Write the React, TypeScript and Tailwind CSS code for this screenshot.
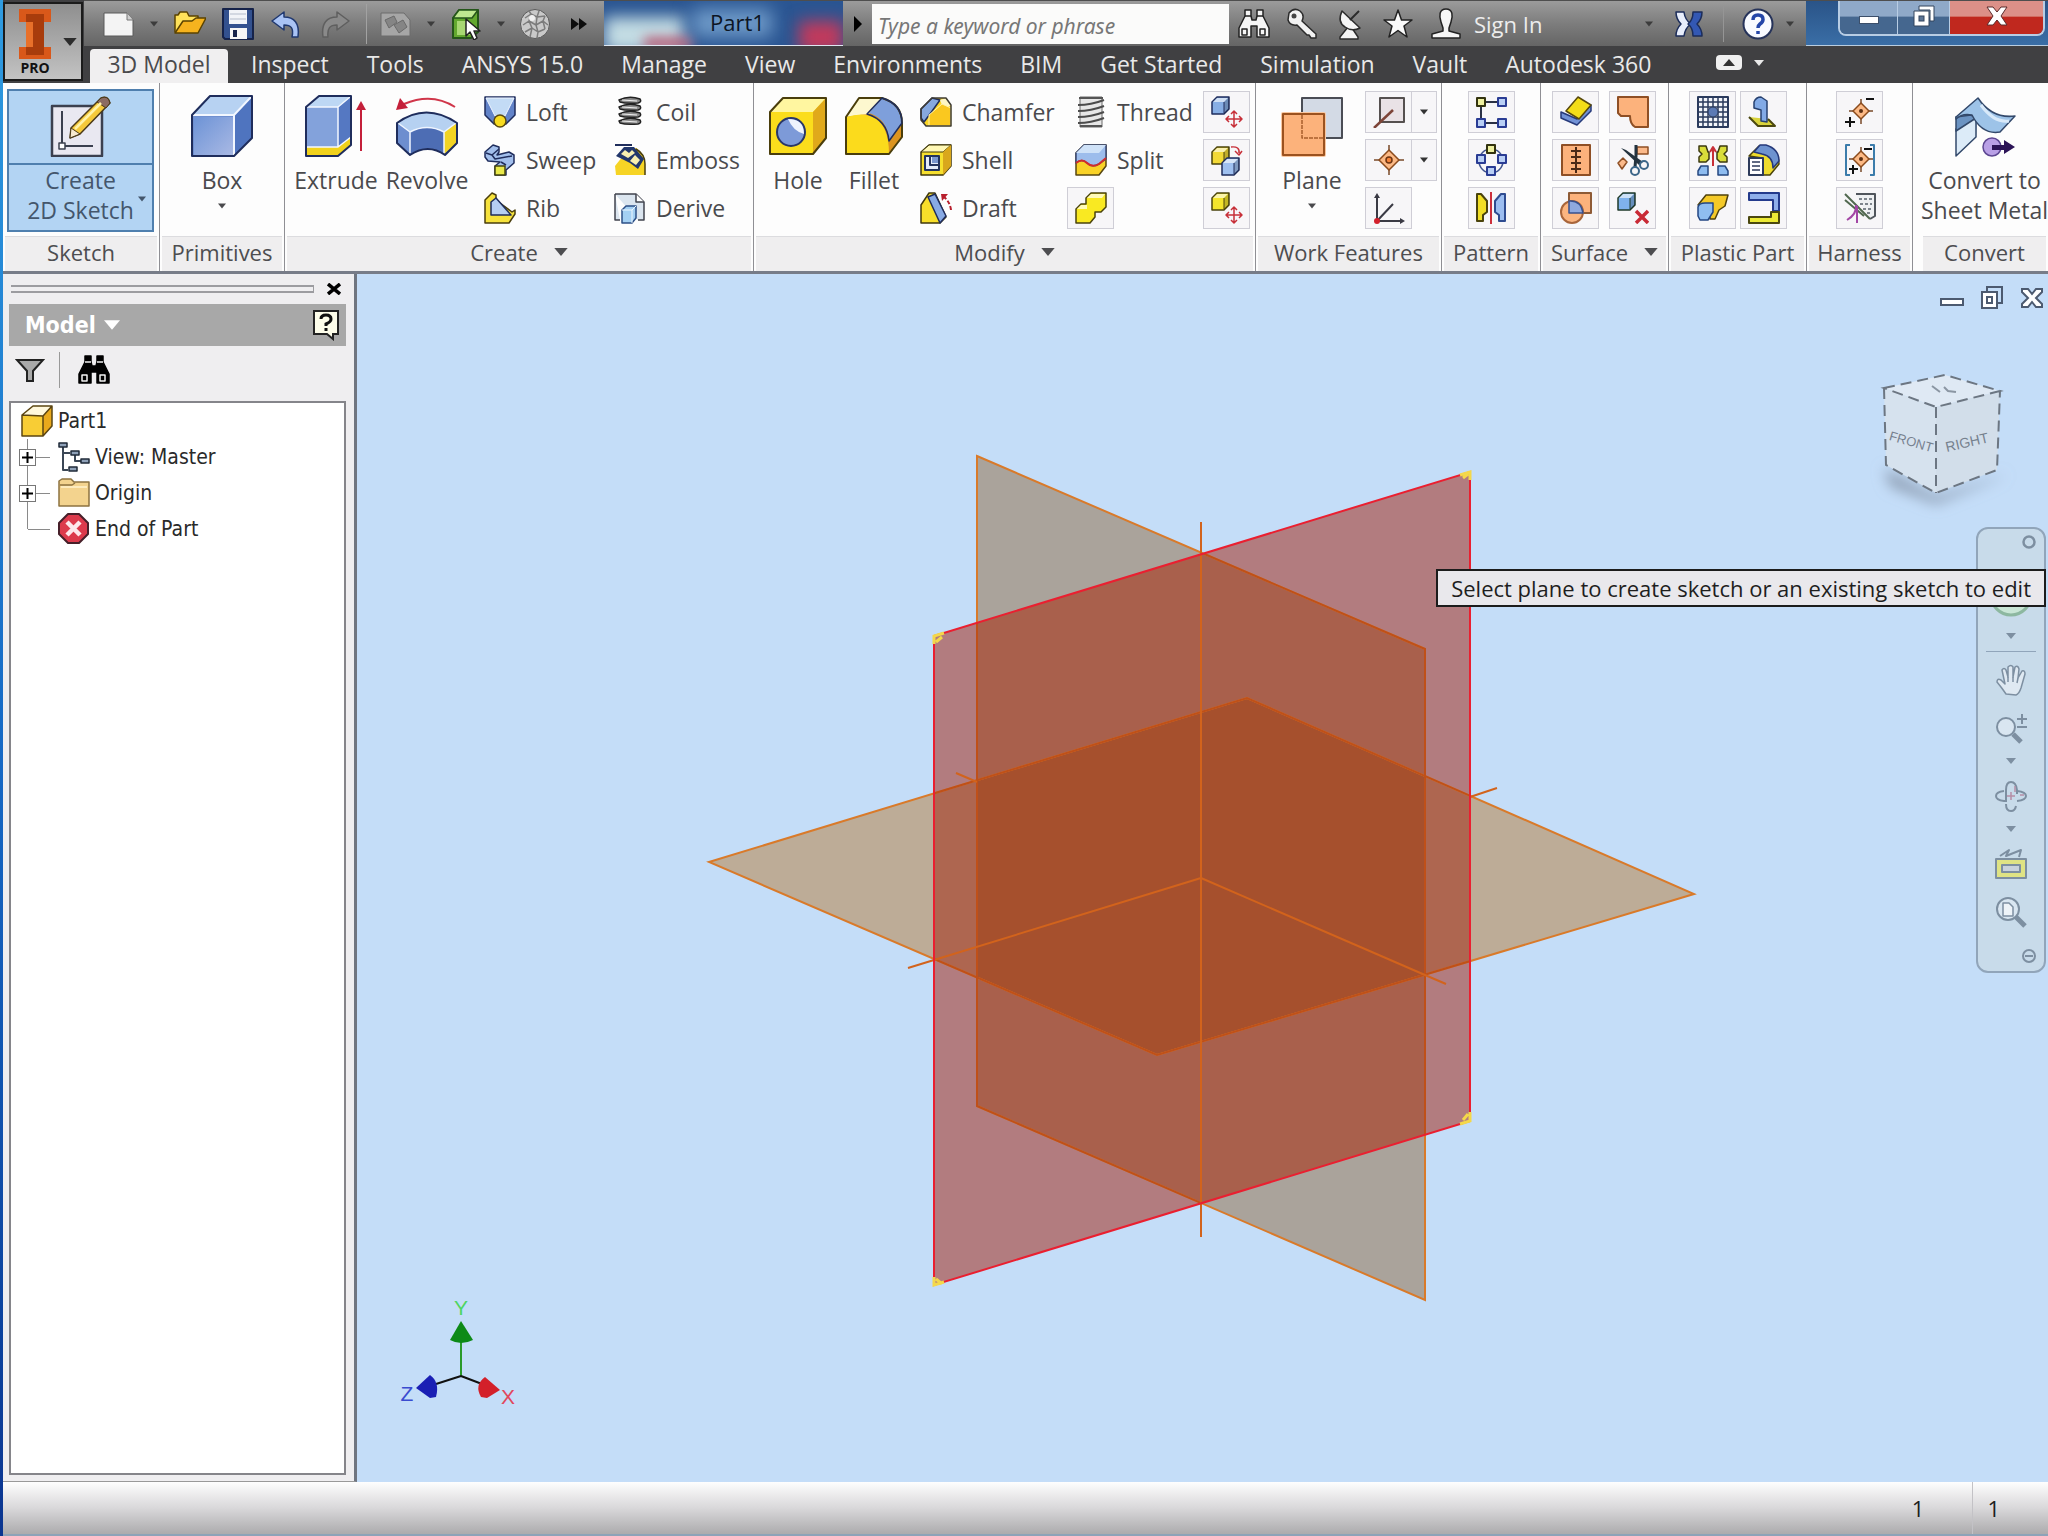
import React from 'react';

type Kids = { children?: React.ReactNode };

const NAVY = '#1f2d5c';

function Ico({ children }: Kids) {
  return (
    <svg viewBox="0 0 32 32" className="w-8 h-8 shrink-0" fill="none" strokeLinejoin="round" aria-hidden="true">
      {children}
    </svg>
  );
}

function BigIco({ children }: Kids) {
  return (
    <svg viewBox="0 0 62 62" className="w-[62px] h-[62px] shrink-0" fill="none" strokeLinejoin="round" aria-hidden="true">
      {children}
    </svg>
  );
}

function Caret({ className = '' }: { className?: string }) {
  return (
    <svg viewBox="0 0 10 6" className={`shrink-0 ${className}`} aria-hidden="true">
      <path d="M0 0H10L5 6Z" fill="currentColor" />
    </svg>
  );
}

/* ---------- quick access and title bar icons ---------- */

const NewIcon = () => (
  <Ico>
    <path d="M2 5H25L31 12V28H2Z" fill="#f4f4f4" stroke="#5a5a5a" />
    <path d="M25 5V12H31" fill="#cfcfcf" stroke="#777" />
  </Ico>
);
const OpenIcon = () => (
  <Ico>
    <path d="M1 24V7H4L6 4H13L15 8H24V14" fill="#ffe25a" stroke="#5b4300" strokeWidth="1.5" />
    <path d="M1 25L9 13H18L22 10H32L24 25Z" fill="#f6b31e" stroke="#5b4300" strokeWidth="1.5" />
  </Ico>
);
const SaveIcon = () => (
  <Ico>
    <path d="M1 1H31V31H3L1 29Z" fill="#33518f" stroke="#16234a" strokeWidth="2" />
    <rect x="7" y="2" width="18" height="14" fill="#f2f4f8" />
    <path d="M8 6H24M8 11H24" stroke="#b4bccb" />
    <rect x="8" y="20" width="17" height="11" fill="#f5f5f5" />
    <rect x="11" y="22" width="4" height="7" fill="#16234a" />
  </Ico>
);
const UndoIcon = () => (
  <Ico>
    <path d="M2 13L14 4V9C24 9 30 15 28 29H22C24 20 21 17 14 17V22Z" fill="#a9c3f5" stroke="#20386f" strokeWidth="1.5" />
  </Ico>
);
const RedoIcon = () => (
  <Ico>
    <path d="M31 13L19 4V9C9 9 3 15 5 29H10C9 20 12 17 19 17V22Z" fill="#8a8a8a" stroke="#5f5f5f" strokeWidth="1.5" />
  </Ico>
);
const UpdateIcon = () => (
  <Ico>
    <path d="M2 5H25L31 12V28H2Z" fill="#a6a6a6" stroke="#6c6c6c" />
    <path d="M6 12L15 8L18 14L10 20ZM15 17L24 12L28 19L20 25Z" fill="#858585" stroke="#6a6a6a" />
  </Ico>
);
const SelectIcon = () => (
  <Ico>
    <path d="M2 10L8 2H27V24L20 30H2Z" fill="#63a82f" stroke="#25551a" strokeWidth="2" />
    <path d="M2 10L8 2H27L21 10Z" fill="#bfe890" stroke="#25551a" strokeWidth="1.5" />
    <path d="M6 13H19V27H6Z" fill="#a8d873" />
    <path d="M15 11V28L19 24L23 32L26 30L23 23H29Z" fill="#fff" stroke="#222" strokeWidth="1.5" />
  </Ico>
);
const SphereIcon = () => (
  <Ico>
    <circle cx="16" cy="16" r="14.5" fill="#c9c9c9" stroke="#5a5a5a" />
    <path d="M6 10L12 6L18 9L26 8M4 17L10 13L17 17L24 13L29 17M6 24L13 20L19 24L26 21M10 3L12 6L10 13L13 20L11 29M20 3L18 9L17 17L19 24L18 30M26 8L24 13L26 21" stroke="#7c7c7c" strokeWidth="1.5" />
    <circle cx="13" cy="10" r="3" fill="#f1f1f1" />
  </Ico>
);
const BinocularsIcon = ({ dark = false }: { dark?: boolean }) => {
  const body = dark ? '#000' : '#f5f5f5';
  const line = dark ? '#f2f2f2' : '#222';
  return (
    <Ico>
      <path d="M7 2H13V8L14 12H18L19 8V2H25V8L31 20V29H19V18H13V29H1V20L7 8Z" fill={body} stroke={dark ? '#000' : line} strokeWidth="1.5" />
      <path d="M7 8H13M19 8H25M4 21H9V27H4ZM22 21H27V27H22Z" stroke={line} strokeWidth="1.5" />
    </Ico>
  );
};
const KeyIcon = () => (
  <Ico>
    <path d="M3 5Q8 -1 14 3Q19 7 16 13L30 26V30H25L23 27H21L11 17Q4 18 2 12Z" fill="#f2f2f2" stroke="#2b2b2b" strokeWidth="1.5" />
    <circle cx="8" cy="8" r="2.5" fill="#444" />
  </Ico>
);
const DishIcon = () => (
  <Ico>
    <path d="M14 19L6 29V31H24V29L18 20Z" fill="#f5f5f5" stroke="#2b2b2b" strokeWidth="1.5" />
    <path d="M8 3Q3 14 11 19Q18 24 26 20Z" fill="#f5f5f5" stroke="#2b2b2b" strokeWidth="1.5" />
    <path d="M16 12L25 3" stroke="#2b2b2b" strokeWidth="2" />
  </Ico>
);
const StarIcon = () => (
  <Ico>
    <path d="M16 2L19.5 12H30L22 18L25 29L16 22.5L7 29L10 18L2 12H12.500Z" fill="#fafafa" stroke="#222" strokeWidth="1.5" />
  </Ico>
);
const UserIcon = () => (
  <Ico>
    <path d="M16 1C23 1 23 8 21 14L19 20V23L30 26V30H2V26L13 23V20L11 14C9 8 9 1 16 1Z" fill="#f6f6f6" stroke="#222" strokeWidth="1.5" />
  </Ico>
);
const ExchangeIcon = () => (
  <Ico>
    <path d="M3 4H11Q12 12 18 16Q12 20 11 28H3Q3 21 8 16Q3 11 3 4Z" fill="#e8eefc" stroke="#1c2d5a" strokeWidth="1.5" />
    <path d="M29 4H20Q20 12 15 16Q20 20 20 28H29Q29 21 24 16Q29 11 29 4Z" fill="#3358b4" stroke="#1c2d5a" strokeWidth="1.5" />
  </Ico>
);
const HelpIcon = () => (
  <Ico>
    <circle cx="16" cy="16" r="14.5" fill="#f8faff" stroke="#26335a" strokeWidth="2" />
    <path d="M11 12Q11 7 16 7Q21 7 21 11.5Q21 14 18 16Q16 17.500 16 20M16 23V26" stroke="#2446a8" strokeWidth="3.5" />
  </Ico>
);

/* ---------- large ribbon icons ---------- */

const SketchIcon = () => (
  <BigIco>
    <rect x="2" y="11" width="50" height="50" fill="#e9e8f1" stroke="#3b404f" strokeWidth="2.5" />
    <path d="M12 16V51H43" stroke="#3b404f" strokeWidth="2" />
    <rect x="9" y="48" width="6" height="6" fill="#fff" stroke="#3b404f" strokeWidth="1.5" />
    <path d="M20 43L21 33L51 3Q58 0 60 8L30 39Z" fill="#f5c93b" stroke="#4b3a19" strokeWidth="1.5" />
    <path d="M20 43L21 33L30 39Z" fill="#f7ead0" stroke="#4b3a19" />
    <path d="M47 7L51 3Q58 0 60 8L56 13Z" fill="#8b6b62" stroke="#4b3a19" />
    <path d="M25 34L51 8" stroke="#fff2a8" strokeWidth="2.5" />
  </BigIco>
);
const BoxIcon = () => (
  <BigIco>
    <path d="M1 20L19 1H61V43L43 61H1Z" fill="#6f8fd0" />
    <path d="M1 20L19 1H61L43 20Z" fill="#b7d2f2" />
    <path d="M43 20L61 1V43L43 61Z" fill="#4f74bf" />
    <path d="M3 22H42V60H3Z" fill="url(#boxFace)" />
    <path d="M2 20H43V60M43 20L60 2" stroke="#f2f7ff" strokeWidth="2" />
    <path d="M1 20L19 1H61V43L43 61H1Z" stroke={NAVY} strokeWidth="2" />
    <defs>
      <linearGradient id="boxFace" x1="0" y1="0" x2="1" y2="1">
        <stop offset="0" stopColor="#6d93d6" />
        <stop offset="1" stopColor="#a9b9e4" />
      </linearGradient>
    </defs>
  </BigIco>
);
const ExtrudeIcon = () => (
  <BigIco>
    <path d="M1 12L14 1H46V50L33 61H1Z" fill="#83a2db" />
    <path d="M1 12L14 1H46L33 12Z" fill="#bdd7f4" />
    <path d="M33 12L46 1V42L33 52Z" fill="#5578c2" />
    <path d="M1 52H33L46 42V50L33 61H1Z" fill="#f1d21c" />
    <path d="M2 12H33V52M33 12L45 2M2 52H33L46 42" stroke="#f4f8ff" strokeWidth="1.5" />
    <path d="M1 12L14 1H46V50L33 61H1Z" stroke={NAVY} strokeWidth="2" />
    <path d="M56 56V10" stroke="#c4203a" strokeWidth="2" />
    <path d="M51 15L56 6L61 15Z" fill="#c4203a" />
  </BigIco>
);
const RevolveIcon = () => (
  <BigIco>
    <path d="M59 12Q36 -3 8 9" stroke="#d0364a" strokeWidth="2" />
    <path d="M0 15L4 3L12 13Z" fill="#c4203a" />
    <path d="M1 28Q30 7 61 28V48L49 60Q32 48 14 60L1 48Z" fill="#6d8ecf" />
    <path d="M1 28Q30 7 61 28L48 37Q31 28 14 37Z" fill="#b6d1f1" />
    <path d="M14 37Q31 28 48 37V59Q32 48 14 59Z" fill="#4d6db4" />
    <path d="M48 37L61 28V48L48 59Z" fill="#f3d423" />
    <path d="M2 28L14 37Q31 28 48 37L60 28M14 37V58M48 37V58" stroke="#eff5ff" strokeWidth="1.5" />
    <path d="M1 28Q30 7 61 28V48L49 60Q32 48 14 60L1 48Z" stroke={NAVY} strokeWidth="2" />
  </BigIco>
);
const HoleIcon = () => (
  <BigIco>
    <path d="M3 17L16 3H59V43L46 59H3Z" fill="#fbdd1c" />
    <path d="M3 17L16 3H59L46 17Z" fill="#fff6a0" />
    <path d="M46 17L59 3V43L46 59Z" fill="#e0a91b" />
    <circle cx="24" cy="37" r="14" fill="#7d9ad8" stroke="#2a3768" strokeWidth="2" />
    <path d="M21 24Q37 24 37 39Q26 36 21 24Z" fill="#eef3fd" />
    <path d="M3 17L16 3H59V43L46 59H3Z" stroke="#4a3e0c" strokeWidth="2" />
  </BigIco>
);
const FilletIcon = () => (
  <BigIco>
    <path d="M3 22L16 3H39Q59 9 59 28V42L46 59H3Z" fill="#dc9420" />
    <path d="M3 22L16 3H39L26 19Q14 20 3 22Z" fill="#fdf8cf" />
    <path d="M26 18L39 3Q59 9 59 28L46 46Q45 24 26 18Z" fill="#7e9fdb" />
    <path d="M3 22Q20 17 30 22Q46 30 46 59H3Z" fill="#fbdb1c" />
    <path d="M3 22L16 3H39Q59 9 59 28V42L46 59H3Z" stroke="#4a3e0c" strokeWidth="2" />
    <path d="M24 19L39 3Q59 9 59 28L46 46Q44 25 24 19Z" stroke={NAVY} strokeWidth="1.5" />
  </BigIco>
);
const PlaneIcon = () => (
  <BigIco>
    <rect x="21" y="3" width="40" height="40" fill="#d3dae5" stroke="#4a4d55" strokeWidth="2" />
    <rect x="2" y="19" width="41" height="41" fill="#fcb27b" stroke="#f9c7a0" strokeWidth="4" />
    <rect x="2" y="19" width="41" height="41" fill="#fcb27b" stroke="#9b521f" strokeWidth="2" />
    <path d="M21 20V43H43" stroke="#a85f2c" strokeWidth="1.5" strokeDasharray="4 1" />
  </BigIco>
);
const ConvertIcon = () => (
  <BigIco>
    <path d="M2 61V22L24 3L22 40Z" fill="#8fb2d6" />
    <path d="M2 61V34L22 22V42Z" fill="#dcebf8" stroke="#33496b" strokeWidth="1.5" />
    <path d="M2 22L17 20L22 23L2 36Z" fill="#6b93c2" stroke="#33496b" strokeWidth="1.5" />
    <path d="M2 22L24 3Q38 24 61 21L46 37Q28 40 18 20Q8 18 2 24Z" fill="#9dc3e8" stroke="#33496b" strokeWidth="1.5" />
    <path d="M27 10Q40 28 55 26" stroke="#d8e9f9" strokeWidth="3" />
    <circle cx="38" cy="52" r="9" fill="#b9a0e6" stroke="#5d4792" strokeWidth="1.5" />
    <path d="M38 50H50V45L61 52L50 59V55H38Z" fill="#2c1457" />
  </BigIco>
);

/* ---------- small ribbon icons ---------- */

const LoftIcon = () => (
  <Ico>
    <path d="M1 1H31V19L22 28H10L1 19Z" fill="#6283c8" stroke={NAVY} strokeWidth="1.5" />
    <path d="M2 2H30L21 20H11Z" fill="#c3dbf5" stroke="#f0f6ff" />
    <circle cx="16" cy="25" r="6" fill="#f8dc20" stroke="#5a4a10" strokeWidth="1.5" />
  </Ico>
);
const SweepIcon = () => (
  <Ico>
    <path d="M1 8L9 1L15 3V8L13 11L25 8L30 11V19L22 26V31H11V22L16 18L4 17L1 13Z" fill="#a2bfec" stroke={NAVY} strokeWidth="1.5" />
    <path d="M2 9L8 11L15 5M8 11L11 15L28 12M17 18L22 21" stroke={NAVY} strokeWidth="1.5" />
    <rect x="11" y="22" width="10" height="9" fill="#e9e94a" stroke="#47460f" strokeWidth="1.5" />
  </Ico>
);
const RibIcon = () => (
  <Ico>
    <path d="M1 8L8 1L12 3V8L28 20L31 18V22L25 31H1Z" fill="#f6e23c" stroke="#4a3e0c" strokeWidth="1.5" />
    <path d="M7 10L12 6L27 23H7Z" fill="#b6cff3" stroke={NAVY} strokeWidth="1.5" />
  </Ico>
);
const CoilIcon = () => (
  <Ico>
    {[2, 9, 16, 23].map(y => (
      <g key={y}>
        <path d={`M5 ${y + 2}Q15 ${y - 3} 26 ${y + 1}Q28 ${y + 4} 24 ${y + 5}Q12 ${y + 6} 6 ${y + 4}Z`} fill="#8b8b8b" stroke="#222" strokeWidth="1.5" />
        <path d={`M8 ${y + 2}L23 ${y + 3}`} stroke="#eee" />
      </g>
    ))}
  </Ico>
);
const EmbossIcon = () => (
  <Ico>
    <path d="M1 22Q10 10 18 4H22Q31 10 31 20V31H2Z" fill="#f6d425" />
    <path d="M22 5Q31 10 31 20V31" stroke="#4a3e0c" strokeWidth="1.5" />
    <path d="M2 12L10 3H20L30 15L24 25L16 19Z" fill="#22376b" />
    <path d="M7 10L11 6L15 9L18 6L21 9L14 14ZM16 17L21 11L26 16L22 21Z" fill="#f8efb0" />
    <path d="M1 1H18" stroke={NAVY} strokeWidth="2" />
  </Ico>
);
const DeriveIcon = () => (
  <Ico>
    <path d="M1 2H22L30 10V28H24M6 28H1V2" fill="#dbe5ef" stroke="#40434d" strokeWidth="1.5" />
    <path d="M22 2V10H30" fill="#fff" stroke="#40434d" strokeWidth="1.5" />
    <path d="M8 18L12 14H22V26L18 31H8Z" fill="#a4d0f3" stroke="#2c4f86" strokeWidth="1.5" />
    <path d="M8 18H18V31M18 18L22 14" stroke="#eef7ff" />
  </Ico>
);
const ChamferIcon = () => (
  <Ico>
    <path d="M1 13L12 2H26L31 9V30H6L1 24Z" fill="#fbd524" />
    <path d="M1 13L12 2L20 4L10 18L4 26L1 22Z" fill="#86a8df" stroke={NAVY} strokeWidth="1.5" />
    <path d="M20 4L26 2L31 9L24 14Z" fill="#fdf6c4" />
    <path d="M9 30V19L22 8L31 12V30Z" fill="#fac81f" stroke="#fff3ab" />
    <path d="M1 13L12 2H26L31 9V30H6L1 24Z" stroke="#3f3c34" strokeWidth="1.5" />
  </Ico>
);
const ShellIcon = () => (
  <Ico>
    <path d="M1 8L9 1H31V22L23 31H1Z" fill="#f6df2e" stroke="#40390c" strokeWidth="1.5" />
    <path d="M1 8L9 1H31L23 8Z" fill="#fff8b5" stroke="#40390c" />
    <path d="M23 8L31 1V22L23 31Z" fill="#d9a71c" />
    <rect x="5" y="12" width="14" height="14" fill="#e5edfa" stroke="#24345f" strokeWidth="2" />
    <path d="M10 13V21H18" stroke="#24345f" strokeWidth="2" />
    <path d="M12 13H18V19H12Z" fill="#7b98cf" />
  </Ico>
);
const DraftIcon = () => (
  <Ico>
    <path d="M1 13L9 1H15L26 25L20 31H1Z" fill="#f8df2a" stroke="#40390c" strokeWidth="1.5" />
    <path d="M8 5L15 2L26 24L20 31Z" fill="#88aae4" stroke={NAVY} strokeWidth="1.5" />
    <path d="M31 18Q30 10 24 5" stroke="#b81f2d" strokeWidth="2" strokeDasharray="4 2" />
    <path d="M21 2H28L22 9Z" fill="#b81f2d" />
  </Ico>
);
const ThreadIcon = () => (
  <Ico>
    <path d="M5 1H27V31H5Z" fill="#e7e7e7" stroke="#6a6a6a" />
    {[6, 12, 18, 24].map(y => (
      <path key={y} d={`M3 ${y + 3}Q16 ${y + 3} 29 ${y - 2}`} stroke="#4c4c4c" strokeWidth="2" />
    ))}
    <path d="M4 2H28M5 30H27" stroke="#555" strokeWidth="2" />
  </Ico>
);
const SplitIcon = () => (
  <Ico>
    <path d="M1 9L9 1H31V22L24 31H1Z" fill="#f9d227" stroke="#574712" strokeWidth="1.5" />
    <path d="M1 9L9 1H31V15L24 20Q17 24 12 19Q7 14 1 19Z" fill="#9dbdec" stroke="#3a4a78" strokeWidth="1.5" />
    <path d="M1 9L9 1H31L24 9Z" fill="#cfe2f8" />
    <path d="M1 19Q7 14 12 19Q17 24 24 20L31 14" stroke="#d22c2c" strokeWidth="2" />
  </Ico>
);
const CombineIcon = () => (
  <Ico>
    <path d="M11 6L16 1H31V15L26 20H20V25L15 31H1V17L6 12H11Z" fill="#f9e922" stroke="#4a430c" strokeWidth="1.5" />
    <path d="M12 6L16 2H30L27 6ZM2 17L6 13H12V17Z" fill="#fffab8" />
  </Ico>
);
const MiniCube = ({ x, y, fill, line }: { x: number; y: number; fill: string; line: string }) => (
  <g transform={`translate(${x} ${y})`}>
    <path d="M1 6L6 1H18V13L13 18H1Z" fill={fill} stroke={line} strokeWidth="1.5" />
    <path d="M2 6L6 2H17L13 6Z" fill="#fff" fillOpacity=".6" />
    <path d="M13 6L18 1V13L13 18Z" fill="#000" fillOpacity=".2" />
    <path d="M13 6V17" stroke={line} />
  </g>
);
const RedMove = () => (
  <path d="M23 15V31M15 23H31M20 18L23 15L26 18M20 28L23 31L26 28M18 20L15 23L18 26M28 20L31 23L28 26" stroke="#c72f38" strokeWidth="1.5" />
);
const MoveFaceIcon = () => (
  <Ico>
    <MiniCube x={0} y={0} fill="#87aee4" line={NAVY} />
    <RedMove />
  </Ico>
);
const CopyObjectIcon = () => (
  <Ico>
    <MiniCube x={0} y={2} fill="#f3d936" line="#4a430c" />
    <MiniCube x={10} y={13} fill="#9fc0f0" line={NAVY} />
    <path d="M20 3Q29 2 28 9M24 7L28 11L31 7" stroke="#c72f38" strokeWidth="1.5" />
  </Ico>
);
const MoveBodyIcon = () => (
  <Ico>
    <MiniCube x={0} y={0} fill="#f3e42c" line="#4a430c" />
    <RedMove />
  </Ico>
);
const AxisIcon = () => (
  <Ico>
    <rect x="7" y="2" width="24" height="24" fill="#e9e2e6" stroke="#55504f" strokeWidth="2" />
    <path d="M1 32L20 14" stroke="#7d4438" strokeWidth="2.5" />
  </Ico>
);
const PointIcon = () => (
  <Ico>
    <path d="M16 1V31M1 16H31" stroke="#7a4a28" strokeWidth="1.5" />
    <path d="M16 6L26 16L16 26L6 16Z" fill="#fcb985" stroke="#8a4a1c" strokeWidth="1.5" />
    <circle cx="16" cy="16" r="3" fill="#f6833a" stroke="#6e3410" strokeWidth="1.5" />
  </Ico>
);
const UcsIcon = () => (
  <Ico>
    <path d="M4 29V4M4 29H29M4 29L20 12" stroke="#3a3a44" strokeWidth="2" />
    <path d="M1 6L4 1L7 6ZM27 26L32 29L27 32Z" fill="#3a3a44" />
    <circle cx="4" cy="29" r="3" fill="#d3202c" />
  </Ico>
);
const Node = ({ x, y, yellow = false }: { x: number; y: number; yellow?: boolean }) => (
  <rect x={x} y={y} width="8" height="8" fill={yellow ? '#eef0a0' : '#b9cff5'} stroke={yellow ? '#33330f' : '#2a3c94'} strokeWidth="2" />
);
const RectPatternIcon = () => (
  <Ico>
    <path d="M10 6H22M6 10V22M10 27H22" stroke="#2b3145" strokeWidth="2" />
    <Node x={2} y={2} yellow />
    <Node x={23} y={2} />
    <Node x={2} y={23} />
    <Node x={23} y={23} />
  </Ico>
);
const CircPatternIcon = () => (
  <Ico>
    <circle cx="16" cy="17" r="12" stroke="#41548f" strokeWidth="1.5" />
    <Node x={12} y={1} yellow />
    <Node x={2} y={11} />
    <Node x={23} y={11} />
    <Node x={12} y={23} />
  </Ico>
);
const MirrorIcon = () => (
  <Ico>
    <path d="M2 2H6L12 9V20L8 23V29H2Z" fill="#f1de25" stroke="#4a430c" strokeWidth="2" />
    <path d="M30 2H26L20 9V20L24 23V29H30Z" fill="#9cbdf0" stroke="#2e4b90" strokeWidth="2" />
    <path d="M16 0V32" stroke="#cc2f3c" strokeWidth="2" />
  </Ico>
);
const ThickenIcon = () => (
  <Ico>
    <path d="M1 16L17 23L31 9V15L17 29L1 22Z" fill="#7292d6" stroke="#26397a" strokeWidth="1.5" />
    <path d="M6 15L18 1L31 9L19 23Z" fill="#f3dd18" stroke="#57490d" strokeWidth="1.5" />
  </Ico>
);
const PatchIcon = () => (
  <Ico>
    <path d="M1 1H31V31H18Q13 28 13 20H4L1 17Z" fill="#fcb27c" stroke="#8e4f25" strokeWidth="2" />
  </Ico>
);
const StitchIcon = () => (
  <Ico>
    <path d="M2 1H30V31H2Z" fill="#fcb27c" stroke="#8e4f25" strokeWidth="2" />
    <path d="M16 3V29M11 7H21M11 13H21M11 19H21M11 25H21" stroke="#4b2a17" strokeWidth="2" />
  </Ico>
);
const TrimIcon = () => (
  <Ico>
    <path d="M20 3H31V10H20ZM1 19L6 14L10 18L5 25Z" fill="#fbb98a" stroke="#8e4f25" strokeWidth="1.5" />
    <path d="M4 4L9 6L26 18L22 21Z" fill="#24333f" />
    <path d="M19 1V12L18 23" stroke="#24333f" strokeWidth="3" />
    <circle cx="18" cy="27" r="4" stroke="#3c6689" strokeWidth="2" />
    <circle cx="27" cy="21" r="4" stroke="#3c6689" strokeWidth="2" />
  </Ico>
);
const SculptIcon = () => (
  <Ico>
    <rect x="9" y="1" width="22" height="20" fill="#fcb27c" stroke="#8e5a35" strokeWidth="2" />
    <circle cx="12" cy="20" r="11" fill="#fbb580" stroke="#a8653a" strokeWidth="2" />
    <path d="M9 9Q21 8 23 21H9Z" fill="#8fa9df" stroke="#39508d" strokeWidth="1.5" />
  </Ico>
);
const DeleteFaceIcon = () => (
  <Ico>
    <MiniCube x={0} y={0} fill="#7fb2ec" line="#1f3a2a" />
    <path d="M19 19L31 31M31 19L19 31" stroke="#c92a35" strokeWidth="3.5" />
  </Ico>
);
const GrillIcon = () => (
  <Ico>
    <rect x="1" y="1" width="30" height="30" fill="#f3f5fa" stroke="#2a3a5c" strokeWidth="2" />
    <path d="M6 1V31M11 1V31M16 1V31M21 1V31M26 1V31M1 6H31M1 11H31M1 16H31M1 21H31M1 26H31" stroke="#2a3a5c" strokeWidth="1.5" />
    <circle cx="16" cy="16" r="5" fill="#5c7ab4" stroke="#2a3a5c" />
  </Ico>
);
const BossIcon = () => (
  <Ico>
    <path d="M1 21L10 30H27L20 23" fill="#d9d33c" stroke="#4b480f" strokeWidth="2" />
    <path d="M6 6Q8 1 13 1L19 5V26L13 25V14L6 12Z" fill="#82aae6" stroke="#27406f" strokeWidth="1.5" />
  </Ico>
);
const RestIcon = () => (
  <Ico>
    <path d="M2 2H9L11 8H12V15L9 18H2V13L5 10L2 7ZM30 2H23L21 8H20V15L23 18H30V13L27 10L30 7Z" fill="#d9dd3a" stroke="#3c3a10" strokeWidth="1.5" />
    <path d="M4 22H11V31H1V27ZM28 22H21V31H31V27Z" fill="#8ebcf0" stroke="#26477f" strokeWidth="1.5" />
    <path d="M16 22V4M13 8L16 3L19 8" stroke="#c72f38" strokeWidth="2" />
  </Ico>
);
const RuleFilletIcon = () => (
  <Ico>
    <path d="M1 12L11 2H18Q31 6 31 20L22 31H14V14Z" fill="#efdc2e" stroke="#4a430c" strokeWidth="1.5" />
    <path d="M6 8L12 1H18Q31 5 31 17L25 24Q25 12 14 10Z" fill="#6e93d0" stroke="#26397a" strokeWidth="1.5" />
    <rect x="1" y="14" width="14" height="17" fill="#fff" stroke="#2d3a5b" strokeWidth="2" />
    <path d="M4 18H12M4 22H12M4 26H12" stroke="#2d3a5b" strokeWidth="1.5" />
  </Ico>
);
const SnapFitIcon = () => (
  <Ico>
    <path d="M1 13L9 3H31L28 14L22 18L18 27H13V12Z" fill="#f4c928" stroke="#4f410c" strokeWidth="1.5" />
    <path d="M1 15Q2 11 8 11H16V20L11 28H3L1 24Z" fill="#8fbdf0" stroke="#234682" strokeWidth="1.5" />
  </Ico>
);
const LipIcon = () => (
  <Ico>
    <path d="M1 1H31V19H25V8H1Z" fill="#8eaeea" stroke="#233a8c" strokeWidth="2" />
    <path d="M1 31V25H23V20H31V31Z" fill="#ecea35" stroke="#4b480f" strokeWidth="2" />
  </Ico>
);
const PinIcon = ({ group = false }: { group?: boolean }) => (
  <Ico>
    {group && <path d="M6 1H2V31H6M26 1H30V31H26" stroke="#3b7cab" strokeWidth="2" />}
    <path d="M17 3V28M5 15H29" stroke="#7a4a28" strokeWidth="1.5" />
    <path d="M17 7L25 15L17 23L9 15Z" fill="#fcb985" stroke="#8a4a1c" strokeWidth="1.5" />
    <circle cx="17" cy="15" r="2" fill="#5c2f12" />
    <path d={group ? 'M20 5H28M5 25H14M9 21V30' : 'M22 3H30M1 26H11M6 21V31'} stroke="#111" strokeWidth="2" />
  </Ico>
);
const HarnessIcon = () => (
  <Ico>
    <path d="M12 2H31V24L26 27" fill="#eef0f2" stroke="#50555c" strokeWidth="2" />
    <path d="M15 7H28M16 12H28M19 17H28M23 21H28" stroke="#7d848c" strokeWidth="2" strokeDasharray="3 2" />
    <path d="M1 2L26 27M1 8L20 24" stroke="#51684f" strokeWidth="2" />
    <path d="M3 28Q13 22 12 13M13 31V14" stroke="#a346a5" strokeWidth="2" />
  </Ico>
);

/* ---------- ribbon parts ---------- */

function Panel({ label, caret = false, className, children }: Kids & { label: string; caret?: boolean; className: string }) {
  return (
    <section className={`flex flex-col border-r border-[#8f8f94] ${className}`} aria-label={label}>
      <div className="h-[153px] flex items-start pt-2">{children}</div>
      <div className="h-[35px] pb-1 mx-0.5 bg-[#efeeef] border-t border-[#dcdcdf] flex items-center justify-center gap-4 text-[22px] leading-[30px] text-[#4d4d50] whitespace-nowrap">
        {label}
        {caret && <Caret className="w-3.5 h-2" />}
      </div>
    </section>
  );
}

function BigTool({ icon, label, caret = false, className = 'w-[88px]' }: { icon: React.ReactNode; label: string; caret?: boolean; className?: string }) {
  return (
    <button className={`flex flex-col items-center pt-1 shrink-0 text-[23px] leading-[30px] text-[#4a4a4d] ${className}`}>
      {icon}
      <span className="mt-2 whitespace-pre text-center">{label}</span>
      {caret && <Caret className="w-2 h-1.5 mt-2" />}
    </button>
  );
}

function Tool({ icon, label }: { icon: React.ReactNode; label: string }) {
  return (
    <button className="h-[42px] flex items-center gap-2.5 text-[23px] leading-[30px] text-[#4a4a4d] whitespace-nowrap">
      {icon}
      {label}
    </button>
  );
}

function BoxTool({ icon, label, menu = false }: { icon: React.ReactNode; label: string; menu?: boolean }) {
  return (
    <div className="flex">
      <button aria-label={label} className="w-[47px] h-[42px] border border-[#cfced6] bg-[#f7f6f8] flex items-center justify-center">
        {icon}
      </button>
      {menu && (
        <button aria-label={`${label} options`} className="w-[25px] h-[42px] border border-l-0 border-[#cfced6] bg-[#f7f6f8] flex items-center justify-center text-[#333]">
          <Caret className="w-2 h-1.5" />
        </button>
      )}
    </div>
  );
}

const Col = ({ children, className = '' }: Kids & { className?: string }) => (
  <div className={`flex flex-col gap-1.5 ${className}`}>{children}</div>
);

const TABS = ['Inspect', 'Tools', 'ANSYS 15.0', 'Manage', 'View', 'Environments', 'BIM', 'Get Started', 'Simulation', 'Vault', 'Autodesk 360'];

const Dot = ({ className }: { className: string }) => (
  <button aria-label="More options" className={`flex justify-center shrink-0 text-[#3c3c3c] ${className}`}>
    <Caret className="w-2 h-1.5" />
  </button>
);

const IconButton = ({ label, children }: Kids & { label: string }) => (
  <button aria-label={label} className="shrink-0">{children}</button>
);

function TitleBar() {
  return (
    <div className="h-[46px] flex bg-linear-to-b from-[#9b9b9b] via-[#7d7d7d] to-[#656565] border-t border-[#4e4e4e]">
      <div className="w-[520px] shrink-0 flex items-center pl-[18px]">
        <IconButton label="New"><NewIcon /></IconButton>
        <Dot className="w-10" />
        <div className="flex gap-4">
          <IconButton label="Open"><OpenIcon /></IconButton>
          <IconButton label="Save"><SaveIcon /></IconButton>
          <IconButton label="Undo"><UndoIcon /></IconButton>
          <IconButton label="Redo"><RedoIcon /></IconButton>
        </div>
        <div className="w-px h-10 bg-[#a2a2a2] ml-4 mr-3" />
        <IconButton label="Update"><UpdateIcon /></IconButton>
        <Dot className="w-10" />
        <IconButton label="Select"><SelectIcon /></IconButton>
        <Dot className="w-9" />
        <IconButton label="Appearance"><SphereIcon /></IconButton>
        <button aria-label="More tools" className="ml-5">
          <svg viewBox="0 0 16 12" className="w-4 h-3"><path d="M0 0L8 6L0 12ZM8 0L16 6L8 12Z" fill="#0c0c0c" /></svg>
        </button>
      </div>
      <div className="w-[239px] shrink-0 relative overflow-hidden bg-[#2a5592] border-b border-[#dfe8f2] flex items-center justify-center">
        <div className="absolute left-0 top-4 w-20 h-9 bg-[#c4dde4] blur-[8px]" />
        <div className="absolute left-10 top-9 w-12 h-3 bg-[#b8617a] blur-[6px]" />
        <div className="absolute right-0 top-5 w-11 h-8 bg-[#c23a5c] blur-[8px]" />
        <div className="absolute left-[88px] top-2 w-20 h-7 bg-[#6f9bc9] blur-[9px]" />
        <h1 className="relative text-[22px] leading-[30px] text-[#0c1524] ml-7 mb-0.5">Part1</h1>
      </div>
      <button aria-label="Collapse search" className="w-[29px] shrink-0 flex items-center justify-center">
        <svg viewBox="0 0 8 16" className="w-2 h-4"><path d="M0 0L8 8L0 16Z" fill="#000" /></svg>
      </button>
      <input
        type="text"
        aria-label="Search"
        placeholder="Type a keyword or phrase"
        className="w-[357px] h-10 mt-[3px] shrink-0 bg-[#fbfbfa] px-1.5 pt-1 text-[21px] italic font-['Noto_Sans','Open_Sans',sans-serif] text-[#333] placeholder:italic placeholder:text-[#777] outline-none"
      />
      <div className="flex-1 min-w-0 flex items-center pl-[9px] gap-4">
        <IconButton label="Find"><BinocularsIcon /></IconButton>
        <IconButton label="Subscription"><KeyIcon /></IconButton>
        <IconButton label="Communication Center"><DishIcon /></IconButton>
        <IconButton label="Favorites"><StarIcon /></IconButton>
        <button className="flex items-center gap-3 text-[22px] leading-[30px] text-[#ededed] whitespace-nowrap">
          <UserIcon />
          Sign In
        </button>
      </div>
      <div className="flex items-center shrink-0">
        <Dot className="w-12" />
        <IconButton label="Exchange Apps"><ExchangeIcon /></IconButton>
        <div className="w-px h-9 bg-[#959595] mx-[18px]" />
        <IconButton label="Help"><HelpIcon /></IconButton>
        <Dot className="w-8" />
      </div>
      <div className="w-[242px] shrink-0 bg-linear-to-b from-[#2a5488] to-[#3a6ea6] border-b border-[#b9cde0] pl-8 pr-[3px]">
        <div className="h-[35px] flex rounded-b-lg overflow-hidden border-2 border-t-0 border-[#b8cde4]">
          <button aria-label="Minimize" className="w-[58px] h-full bg-linear-to-b from-[#8fa9c8] from-45% to-[#45678f] to-50% border-r border-[#b8cde4] flex items-center justify-center">
            <span className="w-5 h-2 mt-1 bg-white border border-[#3c4f6a]" />
          </button>
          <button aria-label="Restore" className="w-[52px] h-full bg-linear-to-b from-[#8fa9c8] from-45% to-[#45678f] to-50% border-r border-[#b8cde4] flex items-center justify-center pb-1">
            <svg viewBox="0 0 24 24" className="w-6 h-6" fill="none">
              <path d="M7 2H22V17H18V6H7Z" fill="#fff" stroke="#33445c" />
              <path d="M2 7H17V22H2Z" fill="#fff" stroke="#33445c" />
              <rect x="7" y="12" width="5" height="5" fill="#5b7596" stroke="#33445c" />
            </svg>
          </button>
          <button aria-label="Close" className="flex-1 h-full bg-linear-to-b from-[#dc9088] from-45% to-[#c0281e] to-50% flex items-center justify-center pb-1">
            <svg viewBox="0 0 24 20" className="w-6 h-5">
              <path d="M2 1H8L12 6L16 1H22L16 10L22 19H16L12 14L8 19H2L8 10Z" fill="#fff" stroke="#5a2a2a" />
            </svg>
          </button>
        </div>
      </div>
    </div>
  );
}

function TabBar() {
  return (
    <nav className="h-[37px] bg-[#404042] flex pl-1.5 text-[23px] leading-[30px] text-[#e9e9e9] whitespace-nowrap">
      <button className="w-[138px] mt-[3px] mr-1 pb-1 rounded-t-sm bg-[#f0eff0] text-[#4a4a4d]">3D Model</button>
      {TABS.map(t => (
        <button key={t} className="px-[19px] pb-0.5">{t}</button>
      ))}
      <button aria-label="Minimize ribbon" className="ml-[46px] pb-1 flex items-center gap-3">
        <svg viewBox="0 0 26 15" className="w-[26px] h-[15px]">
          <rect width="26" height="15" rx="4" fill="#f0f0f0" />
          <path d="M7 11L13 4L19 11Z" fill="#333" />
        </svg>
        <Caret className="w-2.5 h-1.5" />
      </button>
    </nav>
  );
}

function Ribbon() {
  return (
    <div className="flex bg-[#fdfdfd] border-b-[3px] border-[#777c88]">
      <Panel label="Sketch" className="w-[157px]">
        <button className="ml-1 -mt-0.5 w-[147px] h-[143px] border-2 border-[#4f7fae] bg-[#b3d4f3] flex flex-col items-center pt-1 text-[23px] leading-[30px] text-[#44566c] relative">
          <SketchIcon />
          <span className="w-full border-t-2 border-[#4f7fae] mt-1.5 text-center whitespace-pre">{'Create\n2D Sketch'}</span>
          <Caret className="w-2 h-1.5 absolute right-1.5 top-[105px]" />
        </button>
      </Panel>
      <Panel label="Primitives" className="w-[125px]">
        <BigTool icon={<BoxIcon />} label="Box" caret className="w-full" />
      </Panel>
      <Panel label="Create" caret className="w-[469px]">
        <div className="flex gap-[3px] pl-[7px]">
          <BigTool icon={<ExtrudeIcon />} label="Extrude" />
          <BigTool icon={<RevolveIcon />} label="Revolve" />
        </div>
        <Col className="ml-[13px] w-[130px]">
          <Tool icon={<LoftIcon />} label="Loft" />
          <Tool icon={<SweepIcon />} label="Sweep" />
          <Tool icon={<RibIcon />} label="Rib" />
        </Col>
        <Col>
          <Tool icon={<CoilIcon />} label="Coil" />
          <Tool icon={<EmbossIcon />} label="Emboss" />
          <Tool icon={<DeriveIcon />} label="Derive" />
        </Col>
      </Panel>
      <Panel label="Modify" caret className="w-[502px]">
        <div className="flex pl-1.5">
          <BigTool icon={<HoleIcon />} label="Hole" className="w-[76px]" />
          <BigTool icon={<FilletIcon />} label="Fillet" className="w-[76px]" />
        </div>
        <Col className="ml-2 w-[147px]">
          <Tool icon={<ChamferIcon />} label="Chamfer" />
          <Tool icon={<ShellIcon />} label="Shell" />
          <Tool icon={<DraftIcon />} label="Draft" />
        </Col>
        <Col className="w-[136px]">
          <div className="pl-2"><Tool icon={<ThreadIcon />} label="Thread" /></div>
          <div className="pl-2"><Tool icon={<SplitIcon />} label="Split" /></div>
          <BoxTool icon={<CombineIcon />} label="Combine" />
        </Col>
        <Col>
          <BoxTool icon={<MoveFaceIcon />} label="Move Face" />
          <BoxTool icon={<CopyObjectIcon />} label="Copy Object" />
          <BoxTool icon={<MoveBodyIcon />} label="Move Bodies" />
        </Col>
      </Panel>
      <Panel label="Work Features" className="w-[186px]">
        <div className="pl-3"><BigTool icon={<PlaneIcon />} label="Plane" caret /></div>
        <Col className="ml-[9px]">
          <BoxTool icon={<AxisIcon />} label="Axis" menu />
          <BoxTool icon={<PointIcon />} label="Point" menu />
          <BoxTool icon={<UcsIcon />} label="UCS" />
        </Col>
      </Panel>
      <Panel label="Pattern" className="w-[99px]">
        <Col className="mx-auto">
          <BoxTool icon={<RectPatternIcon />} label="Rectangular Pattern" />
          <BoxTool icon={<CircPatternIcon />} label="Circular Pattern" />
          <BoxTool icon={<MirrorIcon />} label="Mirror" />
        </Col>
      </Panel>
      <Panel label="Surface" caret className="w-[128px]">
        <Col className="ml-[11px]">
          <BoxTool icon={<ThickenIcon />} label="Thicken" />
          <BoxTool icon={<StitchIcon />} label="Stitch" />
          <BoxTool icon={<SculptIcon />} label="Sculpt" />
        </Col>
        <Col className="ml-2.5">
          <BoxTool icon={<PatchIcon />} label="Patch" />
          <BoxTool icon={<TrimIcon />} label="Trim" />
          <BoxTool icon={<DeleteFaceIcon />} label="Delete Face" />
        </Col>
      </Panel>
      <Panel label="Plastic Part" className="w-[138px]">
        <Col className="ml-5">
          <BoxTool icon={<GrillIcon />} label="Grill" />
          <BoxTool icon={<RestIcon />} label="Rest" />
          <BoxTool icon={<SnapFitIcon />} label="Snap Fit" />
        </Col>
        <Col className="ml-1">
          <BoxTool icon={<BossIcon />} label="Boss" />
          <BoxTool icon={<RuleFilletIcon />} label="Rule Fillet" />
          <BoxTool icon={<LipIcon />} label="Lip" />
        </Col>
      </Panel>
      <Panel label="Harness" className="w-[106px]">
        <Col className="mx-auto">
          <BoxTool icon={<PinIcon />} label="Place Pin" />
          <BoxTool icon={<PinIcon group />} label="Place Pin Group" />
          <BoxTool icon={<HarnessIcon />} label="Harness Properties" />
        </Col>
      </Panel>
      <Panel label="Convert" className="flex-1 min-w-0 pl-2 border-r-0">
        <BigTool icon={<ConvertIcon />} label={'Convert to\nSheet Metal'} className="w-full" />
      </Panel>
    </div>
  );
}

/* ---------- model browser ---------- */

const CubeIcon = () => (
  <Ico>
    <path d="M1 10L12 1H31V21L22 31H1Z" fill="#f8cd35" />
    <path d="M1 10L12 1H31L22 11H2Z" fill="#fff8dc" />
    <path d="M22 11L31 1V21L22 31Z" fill="#e9a91c" />
    <path d="M1 10L12 1H31V21L22 31H1ZM1 10L22 11L31 1M22 11V31" stroke="#5b4512" strokeWidth="1.5" />
  </Ico>
);
const ViewIcon = () => (
  <Ico>
    <path d="M5 6V29H10M5 12H12M17 14V20H24" stroke="#3b4756" strokeWidth="2" />
    {[[1, 2], [13, 10], [11, 26], [23, 18]].map(([x, y]) => (
      <rect key={x} x={x} y={y} width="8" height="4" fill="#8fa1b8" stroke="#1f2a38" strokeWidth="1.5" />
    ))}
  </Ico>
);
const FolderIcon = () => (
  <Ico>
    <path d="M1 29V4L4 2H13L16 5H31V29Z" fill="#f3d38e" stroke="#8d7340" strokeWidth="1.5" />
    <path d="M2 8H14L17 6" stroke="#8d7340" strokeWidth="1.5" />
    <path d="M3 10H29" stroke="#fdebbd" strokeWidth="2" />
  </Ico>
);
const EndIcon = () => (
  <Ico>
    <path d="M10 1H21L30 10V21L21 30H10L1 21V10Z" fill="#dc3a4c" stroke="#47202a" strokeWidth="2" />
    <path d="M9 9L22 22M22 9L9 22" stroke="#fde8ec" strokeWidth="4.5" />
  </Ico>
);

function TreeRow({ icon, label, expandable = false, last = false }: { icon: React.ReactNode; label: string; expandable?: boolean; last?: boolean }) {
  return (
    <li className="h-9 flex items-center pl-2">
      <div className="relative w-[17px] h-full flex items-center">
        <span className={`absolute left-2 top-0 w-px bg-[#8a8a8a] ${last ? 'h-1/2' : 'h-full'}`} />
        {expandable && (
          <button aria-label={`Expand ${label}`} className="relative w-[17px] h-[17px] bg-white border border-[#777] flex items-center justify-center">
            <svg viewBox="0 0 11 11" className="w-[11px] h-[11px]"><path d="M5.500 0V11M0 5.500H11" stroke="#000" strokeWidth="2" /></svg>
          </button>
        )}
      </div>
      <span className={`h-px bg-[#8a8a8a] ${expandable ? 'w-3.5' : 'w-[22px] -ml-2'}`} />
      <span className="ml-2 flex items-center gap-[5px]">
        {icon}
        {label}
      </span>
    </li>
  );
}

function Browser() {
  return (
    <aside className="w-[354px] shrink-0 flex flex-col bg-[#efeef0] border-r-[3px] border-[#6f7580] border-b border-b-[#999] pl-1.5 pr-2 pb-1.5 text-[21px] leading-6 text-[#2a2a2a] font-['DejaVu_Sans_Condensed','DejaVu_Sans',sans-serif]">
      <div className="h-[30px] shrink-0 flex items-center gap-2">
        <div className="flex-1 h-2 ml-0.5 border-y-2 border-r border-[#9c9ca0]" />
        <button aria-label="Close browser" className="w-6 flex justify-center">
          <svg viewBox="0 0 14 12" className="w-3.5 h-3"><path d="M1 1L13 11M13 1L1 11" stroke="#000" strokeWidth="3.5" /></svg>
        </button>
      </div>
      <div className="h-[42px] shrink-0 bg-[#a8a8a8] flex items-center justify-between pl-4 pr-1.5 text-white">
        <button className="flex items-center gap-2 text-[23px] leading-7 font-bold">
          Model
          <Caret className="w-4 h-2.5" />
        </button>
        <button aria-label="Browser help">
          <svg viewBox="0 0 28 32" className="w-7 h-8" fill="none">
            <path d="M2 2H26V25H21V30L15 25H2Z" fill="#fdfdea" stroke="#222" strokeWidth="2" />
            <path d="M9 10Q9 6 14 6Q19 6 19 10Q19 13 14 15V17M14 19V22" stroke="#111" strokeWidth="3" />
          </svg>
        </button>
      </div>
      <div className="h-[55px] shrink-0 flex items-center pl-1.5 pb-2">
        <button aria-label="Filter">
          <svg viewBox="0 0 30 24" className="w-[30px] h-6">
            <path d="M2 2H28L18 13V23H12V13Z" fill="#a9a9a9" stroke="#222" strokeWidth="2" />
          </svg>
        </button>
        <div className="w-px h-9 bg-[#999] mx-3.5" />
        <button aria-label="Find in browser" className="ml-1"><BinocularsIcon dark /></button>
      </div>
      <ul className="flex-1 bg-white border-2 border-[#85858a]">
        <li className="h-9 flex items-center gap-[5px] pl-2.5">
          <CubeIcon />
          Part1
        </li>
        <TreeRow icon={<ViewIcon />} label="View: Master" expandable />
        <TreeRow icon={<FolderIcon />} label="Origin" expandable />
        <TreeRow icon={<EndIcon />} label="End of Part" last />
      </ul>
    </aside>
  );
}

/* ---------- viewport ---------- */

const YZ = '977,456 1425,649 1425,1300 977,1106';
const XY = '934,636 1470,472 1470,1121 934,1285';
const XZ = '709,862 1247,698 1694,894 1157,1055';

function Scene() {
  return (
    <svg viewBox="357 274 1691 1208" className="w-full h-full" fill="none" role="img" aria-label="Origin planes">
      <defs>
        <clipPath id="clipXY"><polygon points={XY} /></clipPath>
        <clipPath id="clipYZ"><polygon points={YZ} /></clipPath>
        <filter id="soft" x="-30%" y="-100%" width="160%" height="300%"><feGaussianBlur stdDeviation="7" /></filter>
      </defs>

      <polygon points={YZ} fill="#aaa39b" />
      <polygon points={XZ} fill="#bdac97" />
      <polygon points={XY} fill="#b27c7f" />
      <g clipPath="url(#clipXY)">
        <polygon points={YZ} fill="#a9604c" />
        <polygon points={XZ} fill="#ae6650" />
        <g clipPath="url(#clipYZ)">
          <polygon points={XZ} fill="#a6502d" />
        </g>
      </g>

      <g stroke="#d97a2a" strokeWidth="2">
        <polygon points={YZ} />
        <polygon points={XZ} />
      </g>
      <g clipPath="url(#clipXY)" stroke="#bf5019" strokeWidth="2">
        <polygon points={YZ} />
        <polygon points={XZ} />
      </g>
      <g stroke="#d2631c" strokeWidth="2">
        <path d="M1201 522V1237" />
        <path d="M956 773L977 782M1425 975L1446 984M1201 878L1425 975" />
        <path d="M908 968L934 960M1470 797L1497 788M1201 878L934 960" />
      </g>
      <polygon points={XY} stroke="#ea1f30" strokeWidth="2" />
      <g stroke="#f4d84a" strokeWidth="3">
        <path d="M934 644V636L944 633M936 642L942 637" />
        <path d="M1460 475L1470 472V480M1463 478L1468 474" />
        <path d="M934 1277V1285L944 1282M936 1279L942 1284" />
        <path d="M1460 1124L1470 1121V1112M1463 1120L1468 1114" />
      </g>

      {/* axis triad */}
      <path d="M461 1376V1340" stroke="#2a9a2a" strokeWidth="2" />
      <path d="M461 1376L436 1384M461 1376L482 1384" stroke="#111" strokeWidth="2" />
      <path d="M461 1321L473 1340Q461 1346 450 1340Z" fill="#0d8a17" />
      <path d="M416 1388L430 1375Q440 1382 436 1397L430 1398Z" fill="#1a1fb4" />
      <path d="M500 1390L485 1377Q474 1385 481 1397L487 1398Z" fill="#d3202a" />
      <g fontFamily="Liberation Sans, sans-serif" fontSize="21" textAnchor="middle">
        <text x="461" y="1315" fill="#4fd562">Y</text>
        <text x="407" y="1401" fill="#3a4bd0">Z</text>
        <text x="508" y="1404" fill="#e2475c">X</text>
      </g>

      {/* view cube */}
      <path d="M1884 468L1936 496L2008 474L1990 482L1936 504L1890 486Z" fill="#8d9db2" filter="url(#soft)" />
      <path d="M1884 388L1945 375L2000 391L1936 407Z" fill="#dfe9f4" />
      <path d="M1884 388L1936 407V493L1886 465Z" fill="#d6e2ee" />
      <path d="M1936 407L2000 391L1997 470L1936 493Z" fill="#d2deea" />
      <path d="M1884 388L1945 375L2000 391L1936 407ZM1936 407V493M1884 388L1886 465L1936 493L1997 470L2000 391" stroke="#6c7682" strokeWidth="2" strokeDasharray="11 6" />
      <path d="M1932 386L1940 392M1944 387L1948 391L1956 392" stroke="#8b96a3" strokeWidth="2" />
      <g fontFamily="Liberation Sans, sans-serif" fill="#76818e" textAnchor="middle">
        <text transform="translate(1910 446) rotate(16)" fontSize="13">FRONT</text>
        <text transform="translate(1968 447) rotate(-13)" fontSize="14">RIGHT</text>
      </g>
    </svg>
  );
}

const NAV_LINE = '#7d8fa1';

function NavBar() {
  return (
    <div className="absolute right-0.5 top-[253px] w-[70px] h-[446px] rounded-xl border-2 border-[#91a5ba] bg-[#c8dbea] flex flex-col items-center text-[#7d8fa1]">
      <button aria-label="Close navigation bar" className="self-end mr-2 mt-1.5">
        <svg viewBox="0 0 14 14" className="w-3.5 h-3.5" fill="none"><circle cx="7" cy="7" r="5.5" stroke={NAV_LINE} strokeWidth="2.5" /></svg>
      </button>
      <button aria-label="Full navigation wheel" className="mt-6">
        <svg viewBox="0 0 44 44" className="w-11 h-11"><circle cx="22" cy="22" r="20" fill="#c9e6d6" stroke="#8db8a0" strokeWidth="3" /></svg>
      </button>
      <Caret className="w-2.5 h-1.5 mt-4" />
      <div className="w-[50px] h-px bg-[#91a5ba] mt-3" />
      <button aria-label="Pan" className="mt-3">
        <Ico>
          <path d="M11 30Q7 24 2 18Q2 14 6 16L10 20L7 6Q9 3 11 6L13 13V3Q16 0 18 3V13L20 3Q23 1 24 5L23 14L27 7Q30 6 30 10L26 24Q24 30 21 31Z" fill="#dfe9f2" stroke={NAV_LINE} strokeWidth="1.5" />
          <path d="M13 13V18M18 13V18M23 14L22 19" stroke={NAV_LINE} strokeWidth="1.5" />
        </Ico>
      </button>
      <button aria-label="Zoom" className="mt-4">
        <Ico>
          <circle cx="11" cy="15" r="9" fill="#d9e6f1" stroke={NAV_LINE} strokeWidth="2" />
          <path d="M18 22L26 30" stroke={NAV_LINE} strokeWidth="5" />
          <path d="M27 2V12M22 7H32M22 15H32" stroke={NAV_LINE} strokeWidth="2" />
        </Ico>
      </button>
      <Caret className="w-2.5 h-1.5 mt-3.5" />
      <button aria-label="Orbit" className="mt-4">
        <Ico>
          <path d="M9 11Q1 12 1 16Q1 20 9 21H12M22 11Q31 12 31 16Q31 20 22 21" stroke={NAV_LINE} strokeWidth="2" />
          <path d="M11 24Q11 31 16 31Q20 31 21 26M11 21V10Q11 2 16 2Q21 2 22 10V14" stroke={NAV_LINE} strokeWidth="2" />
          <path d="M16 12V20M12 16H20M20 6V12M25 15H29" stroke="#b58fa6" strokeWidth="1.5" />
        </Ico>
      </button>
      <Caret className="w-2.5 h-1.5 mt-3.5" />
      <button aria-label="Look at" className="mt-4">
        <Ico>
          <path d="M5 8L14 2L11 8L26 2L24 9" stroke={NAV_LINE} strokeWidth="2" />
          <rect x="1" y="11" width="30" height="19" fill="#dfe384" stroke={NAV_LINE} strokeWidth="2" />
          <rect x="7" y="17" width="18" height="7" fill="#c8d2dc" stroke={NAV_LINE} strokeWidth="2" />
        </Ico>
      </button>
      <button aria-label="Zoom all" className="mt-4">
        <Ico>
          <circle cx="13" cy="13" r="11" fill="#d9e6f1" stroke={NAV_LINE} strokeWidth="2" />
          <path d="M8 7H14L18 11V20H8Z" fill="#eef3f8" stroke={NAV_LINE} strokeWidth="1.5" />
          <path d="M21 21L30 30" stroke={NAV_LINE} strokeWidth="5" />
        </Ico>
      </button>
      <button aria-label="Navigation bar options" className="self-end mr-2 mt-auto mb-2">
        <svg viewBox="0 0 14 14" className="w-3.5 h-3.5" fill="none"><circle cx="7" cy="7" r="6" stroke={NAV_LINE} strokeWidth="2" /><path d="M3 7H11" stroke={NAV_LINE} strokeWidth="2" /></svg>
      </button>
    </div>
  );
}

function Viewport() {
  return (
    <main className="relative flex-1 min-w-0 bg-[#c4ddf8] overflow-hidden">
      <div className="absolute inset-0"><Scene /></div>
      <div className="absolute right-1 top-3 flex gap-4 items-center">
        <button aria-label="Minimize document">
          <svg viewBox="0 0 24 24" className="w-6 h-6"><rect x="1" y="13" width="22" height="6" fill="#fff" stroke="#4c5a70" strokeWidth="2" /></svg>
        </button>
        <button aria-label="Restore document">
          <svg viewBox="0 0 24 24" className="w-6 h-6" fill="none" stroke="#4c5a70" strokeWidth="2">
            <path d="M7 5V1H22V17H18" />
            <rect x="2" y="6" width="15" height="16" fill="#fff" />
            <rect x="7" y="11" width="5" height="6" />
          </svg>
        </button>
        <button aria-label="Close document">
          <svg viewBox="0 0 24 24" className="w-6 h-6">
            <path d="M2 3H8L12 8L16 3H22V6L16 12L22 18V21H16L12 16L8 21H2V18L8 12L2 6Z" fill="#fff" stroke="#4c5a70" strokeWidth="2" />
          </svg>
        </button>
      </div>
      <NavBar />
      <div role="tooltip" className="absolute right-0.5 top-[295px] h-[38px] border-2 border-[#1c1c1c] bg-[#e9e8ec] px-[13px] text-[22px] leading-[34px] text-[#1e1e1e] whitespace-nowrap">
        Select plane to create sketch or an existing sketch to edit
      </div>
    </main>
  );
}

export default function App() {
  return (
    <div className="min-h-screen flex overflow-x-clip font-['Open_Sans','Noto_Sans',sans-serif]">
      <div className="w-[3px] shrink-0 bg-linear-to-b from-[#2f9be0] via-[#1668c4] to-[#0b3590]" />
      <div className="flex-1 min-w-0 flex flex-col">
        <header>
          <div className="flex bg-[#404042]">
            <button className="w-[80px] h-[79px] mt-0.5 mr-px shrink-0 border-2 border-[#1b1b1b] bg-linear-to-b from-[#8f8f8f] to-[#c3c3c3] flex items-center justify-between pl-3 pr-1 text-[#2c2c2c]">
              <span className="flex flex-col items-center">
                <svg viewBox="0 0 36 52" className="w-9 h-[52px]">
                  <path d="M2 1H34V14H27V39H34V51H2V39H9V14H2Z" fill="#d9581a" />
                  <path d="M9 6H27V47H9Z" fill="#a83c0c" />
                  <path d="M9 14H16V39H9Z" fill="#e8702a" />
                </svg>
                <span className="text-[14px] leading-4 font-bold text-[#111]">PRO</span>
              </span>
              <Caret className="w-3.5 h-2" />
            </button>
            <div className="flex-1 min-w-0">
              <TitleBar />
              <TabBar />
            </div>
          </div>
          <Ribbon />
        </header>
        <div className="flex-1 flex">
          <Browser />
          <Viewport />
        </div>
        <footer className="h-[54px] shrink-0 border-b-2 border-[#8da3b8] bg-linear-to-b from-[#fefefe] via-[#d9d8da] to-[#acabad] flex items-center justify-end text-[22px] leading-[30px] text-[#1e1e1e]">
          <span className="pr-12">1</span>
          <span className="h-full border-l border-[#c3c2c6] flex items-center pl-3.5 pr-12">1</span>
        </footer>
      </div>
    </div>
  );
}
